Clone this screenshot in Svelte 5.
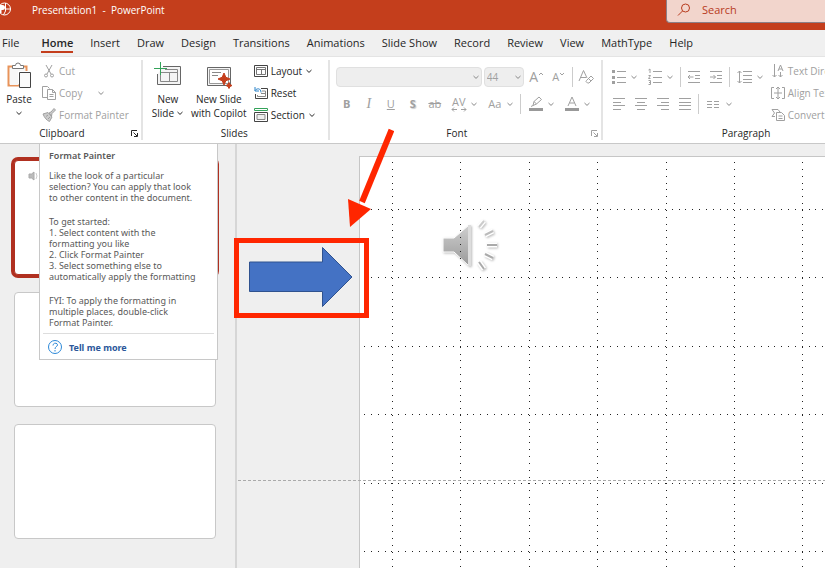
<script>
    const tabs = ['File', 'Home', 'Insert', 'Draw', 'Design', 'Transitions', 'Animations', 'Slide Show', 'Record', 'Review', 'View', 'MathType', 'Help'];
    let activeTab = $state('Home');

    const slides = [1, 2, 3];
    let currentSlide = $state(1);

    // Grid lines of the slide, counted from its top left corner
    const cell = 68.4;
    const gridX = Array.from({ length: 24 }, (_, i) => 32.5 + i * cell);
    const gridY = Array.from({ length: 16 }, (_, i) => 52.5 + i * cell);
</script>

{#snippet chevron()}
    <svg class="chevron" viewBox="0 0 8 8" width="8" height="8"><path d="M1.5 3l2.5 2.4L6.5 3" /></svg>
{/snippet}

{#snippet launcher()}
    <svg viewBox="0 0 9 9" width="9" height="9"><path d="M1.5 7V1.5H7M3.5 3.5L7 7M7.5 4v3.5H4" /></svg>
{/snippet}

<div class="app">
    <header class="titlebar">
        <svg class="logo" viewBox="0 0 12 18" width="12" height="18">
            <circle cx="4.5" cy="9" r="6" />
            <path d="M5.5 3v6h5M5.5 9v2l-2 4" />
            <path class="solid" d="M0 5h2.500a2.500 2.500 0 0 1 0 5H1.500v3H0z" />
        </svg>
        <span class="title">Presentation1&nbsp; -&nbsp; PowerPoint</span>
        <label class="search">
            <svg viewBox="0 0 14 14" width="14" height="14"><circle cx="8.5" cy="5" r="4" /><path d="M5.5 8L1 12.5" /></svg>
            <input type="text" placeholder="Search" aria-label="Search" />
        </label>
    </header>

    <nav class="tabs">
        {#each tabs as tab}
            <button class:active={tab === activeTab} onclick={() => (activeTab = tab)}>{tab}</button>
        {/each}
    </nav>

    <div class="ribbon">
        <section class="group clipboard">
            <div class="body">
                <button class="big">
                    <svg viewBox="0 0 26 28" width="26" height="28">
                        <path d="M7 4.500H2.500v19H13M18 4.500h2.500V9" stroke="#e8935a" stroke-width="2" />
                        <path d="M4 6h15v3h-7v14H4z" fill="#f7f7f7" stroke="none" />
                        <path d="M6.500 6.500v-3h3a2.500 2.500 0 0 1 5 0h3v3z" fill="#fff" stroke="#777" />
                        <path d="M13.500 10.500h11v15h-11z" fill="#fafafa" stroke="#444" />
                    </svg>
                    <span>Paste</span>
                    {@render chevron()}
                </button>
                <div class="stack dim">
                    <button class="small">
                        <svg viewBox="0 0 14 14" width="14" height="14"><path d="M4 1l5 9M10 1L5 10" /><circle cx="4" cy="11.500" r="1.500" /><circle cx="10" cy="11.500" r="1.500" /></svg>
                        Cut
                    </button>
                    <button class="small">
                        <svg viewBox="0 0 14 14" width="14" height="14"><path d="M5 11.500H.5v-11h5l2 2M5.500 3.500h5l3 3v7h-8zM10.500 3.500v3h3M7.500 8.500h4M7.500 10.500h4" /></svg>
                        Copy
                        <span class="spaced">{@render chevron()}</span>
                    </button>
                    <button class="small">
                        <svg viewBox="0 0 14 14" width="14" height="14"><path d="M7 5l2 -1 3-3.500 1.500 1.500L10 5.500 9.500 8z" fill="#ccc" /><path d="M1 6l5-1.500L10 9l-2.500 4.500C5 12.500 2.500 10 1 6zM4 8.500l2-1.500M6 11l2-2" fill="#ccc" /></svg>
                        Format Painter
                    </button>
                </div>
            </div>
            <footer><span>Clipboard</span><button class="launch" aria-label="Clipboard options">{@render launcher()}</button></footer>
        </section>

        <section class="group slides">
            <div class="body">
                <button class="big">
                    <svg viewBox="0 0 28 28" width="28" height="28">
                        <path d="M9 4.500h17.500v18h-23V12" fill="#f4f4f4" stroke="#666" />
                        <path d="M11 7.500h12.500v12h-17V12M7 10.500h16M15.500 10.500v9" stroke="#888" />
                        <path d="M6.500 0v13M0 6.500h13" stroke="#34a35a" />
                    </svg>
                    <span>New</span>
                    <span class="inline">Slide {@render chevron()}</span>
                </button>
                <button class="big">
                    <svg viewBox="0 0 28 28" width="28" height="28">
                        <path d="M2.500 5.500h23v18h-23z" fill="#f4f4f4" stroke="#666" />
                        <path d="M4.500 7.500h19v14h-19z" fill="#fff" stroke="#999" />
                        <path d="M7 10.500h9M7 13.500h6" stroke="#888" />
                        <path d="M19 11l1.800 4.200L25 17l-4.200 1.800L19 23l-1.800-4.200L13 17l4.200-1.800z" fill="#c43e1c" stroke="#c43e1c" />
                        <path d="M24 20.500l1 2 2 1-2 1-1 2-1-2-2-1 2-1z" fill="#c43e1c" stroke="#c43e1c" />
                    </svg>
                    <span>New Slide</span>
                    <span>with Copilot</span>
                </button>
                <div class="stack">
                    <button class="small">
                        <svg viewBox="0 0 14 14" width="14" height="14"><path d="M.5 1.500h13v11H.5z" stroke="#444" /><path d="M2.500 3.500h9v7h-9zM2.500 5.500h9M7.500 5.500v5" stroke="#777" /></svg>
                        Layout {@render chevron()}
                    </button>
                    <button class="small">
                        <svg viewBox="0 0 14 14" width="14" height="14"><path d="M7 2.500h6.500v10H1.500V8" stroke="#444" /><path d="M8 5h3.500v5.500H3.500V9M7 7.500h4" stroke="#888" /><path d="M1 1v4h4M1 4.500C3 2 7 2 7 6.500" stroke="#2b83c9" /></svg>
                        Reset
                    </button>
                    <button class="small">
                        <svg viewBox="0 0 14 14" width="14" height="14"><path d="M.5 .5h13v2H.5z" stroke="#34a35a" /><path d="M.5 4.500h13v9H.5z" stroke="#444" /><path d="M3 6.500h8v5H3z" stroke="#888" fill="#eee" /></svg>
                        Section {@render chevron()}
                    </button>
                </div>
            </div>
            <footer><span>Slides</span></footer>
        </section>

        <section class="group font">
            <div class="body rows dim">
                <div class="row">
                    <span class="picker family"><select aria-label="Font"><option></option></select>{@render chevron()}</span>
                    <span class="picker size"><select aria-label="Font size"><option>44</option></select>{@render chevron()}</span>
                    <button class="tool letter" aria-label="Increase font size">A<svg viewBox="0 0 6 12" width="6" height="12"><path d="M1 4l2-2 2 2" /></svg></button>
                    <button class="tool" aria-label="Decrease font size">A<svg viewBox="0 0 6 12" width="6" height="12"><path d="M1 2l2 2 2-2" /></svg></button>
                    <i class="divider"></i>
                    <button class="tool" aria-label="Clear formatting">
                        <svg viewBox="0 0 16 16" width="16" height="16"><path d="M1 12L5.500 1.500 9 9M3 8.500h5M8.500 11.500L13 7l2.500 2.500-4.500 4.500H9.500l-1.500-1.500zM10.500 9.500L13 12" /></svg>
                    </button>
                </div>
                <div class="row">
                    <button class="tool"><b>B</b></button>
                    <button class="tool"><em>I</em></button>
                    <button class="tool"><u>U</u></button>
                    <button class="tool shadow"><b>S</b></button>
                    <button class="tool"><s>ab</s></button>
                    <button class="drop" aria-label="Character spacing">
                        <span class="glyph spacing">AV<svg viewBox="0 0 16 5" width="16" height="5"><path d="M3 .5L1 2.500l2 2M1 2.500h5M13 .5l2 2-2 2M15 2.500h-5" /></svg></span>
                        {@render chevron()}
                    </button>
                    <button class="drop"><span class="glyph">Aa</span>{@render chevron()}</button>
                    <i class="divider"></i>
                    <button class="drop" aria-label="Highlight colour">
                        <svg class="glyph" viewBox="0 0 18 18" width="18" height="18"><path d="M6 10.500l1-4L12 2l2.500 2.500-5 4.500zM4 11.500l2-1M7 6.500l2.500 2.500" /><path d="M2 13h14v3H2z" fill="#999" stroke="none" /></svg>
                        {@render chevron()}
                    </button>
                    <button class="drop" aria-label="Font colour">
                        <svg class="glyph" viewBox="0 0 18 18" width="18" height="18"><path d="M5 11l4-9 4 9M6.500 8h5" /><path d="M2 13h14v3H2z" fill="#999" stroke="none" /></svg>
                        {@render chevron()}
                    </button>
                </div>
            </div>
            <footer><span>Font</span><button class="launch dim" aria-label="Font options">{@render launcher()}</button></footer>
        </section>

        <section class="group paragraph">
            <div class="body dim">
                <div class="rows">
                    <div class="row">
                        <button class="drop" aria-label="Bullets">
                            <svg class="glyph" viewBox="0 0 18 18" width="18" height="18"><path d="M7 3.500h9M7 9.500h9M7 14.500h9" /><path d="M2 2h3v3H2zM2 8h3v3H2zM2 13h3v3H2z" fill="#a0a0a0" stroke="none" /></svg>
                            {@render chevron()}
                        </button>
                        <button class="drop" aria-label="Numbering">
                            <svg class="glyph" viewBox="0 0 18 18" width="18" height="18"><path d="M7 3.500h9M7 9.500h9M7 14.500h9M2.500 2L4 1v4M2.500 7.500h2L2.500 10.500h2M2.500 12.500h2v4h-2M3 14.500h1.500" /></svg>
                            {@render chevron()}
                        </button>
                        <i class="divider"></i>
                        <button class="tool" aria-label="Decrease indent">
                            <svg viewBox="0 0 14 14" width="14" height="14"><path d="M1 1.500h12M8 5.500h5M8 8.500h5M1 12.500h12M6.500 7H1M3 5L1 7l2 2" /></svg>
                        </button>
                        <button class="tool" aria-label="Increase indent">
                            <svg viewBox="0 0 14 14" width="14" height="14"><path d="M1 1.500h12M8 5.500h5M8 8.500h5M1 12.500h12M1 7h5.500M4.500 5l2 2-2 2" /></svg>
                        </button>
                        <i class="divider"></i>
                        <button class="drop" aria-label="Line spacing">
                            <svg class="glyph" viewBox="0 0 18 18" width="18" height="18"><path d="M7 3.500h9M7 7.500h9M7 11.500h9M7 14.500h9M3.500 3v12M1.500 5l2-2 2 2M1.500 13l2 2 2-2" /></svg>
                            {@render chevron()}
                        </button>
                    </div>
                    <div class="row aligns">
                        <button class="tool" aria-label="Align left">
                            <svg viewBox="0 0 14 14" width="14" height="14"><path d="M1 1.500h12M1 5.500h8M1 8.500h12M1 12.500h8" /></svg>
                        </button>
                        <button class="tool" aria-label="Centre">
                            <svg viewBox="0 0 14 14" width="14" height="14"><path d="M1 1.500h12M3 5.500h8M1 8.500h12M3 12.500h8" /></svg>
                        </button>
                        <button class="tool" aria-label="Align right">
                            <svg viewBox="0 0 14 14" width="14" height="14"><path d="M1 1.500h12M5 5.500h8M1 8.500h12M5 12.500h8" /></svg>
                        </button>
                        <button class="tool" aria-label="Justify">
                            <svg viewBox="0 0 14 14" width="14" height="14"><path d="M1 1.500h12M1 5.500h12M1 8.500h12M1 12.500h12" /></svg>
                        </button>
                        <i class="divider"></i>
                        <button class="drop" aria-label="Columns">
                            <svg class="glyph" viewBox="0 0 18 18" width="18" height="18"><path d="M2 6.500h5M9 6.500h5M2 9.500h5M9 9.500h5M2 12.500h5M9 12.500h5" /></svg>
                            {@render chevron()}
                        </button>
                    </div>
                </div>
                <div class="stack">
                    <button class="small">
                        <svg viewBox="0 0 14 14" width="14" height="14"><path d="M3.500 0v13M1.500 11l2 2 2-2M7 7l2.500-6L12 7M8 5h3M9.500 8v5M7.500 11l2 2 2-2" /></svg>
                        Text Direction
                    </button>
                    <button class="small">
                        <svg viewBox="0 0 14 14" width="14" height="14"><path d="M3 1.500H.5v11H3M11 1.500h2.500v11H11M3 7h8M7 1v12M5 3l2-2 2 2M5 11l2 2 2-2" /></svg>
                        Align Text
                    </button>
                    <button class="small">
                        <svg viewBox="0 0 14 14" width="14" height="14"><path d="M1 1.500h6l2 2.500M1 1.500L3.500 5 1 8.500h3M5.500 4.500h5l3 3v5h-8zM7.500 8h4M7.500 10.500h4" /></svg>
                        Convert to SmartArt
                    </button>
                </div>
            </div>
            <footer><span>Paragraph</span></footer>
        </section>
    </div>

    <main class="workspace">
        <aside class="thumbs">
            {#each slides as slide}
                <button class="thumb" class:current={slide === currentSlide} aria-label="Slide {slide}" onclick={() => (currentSlide = slide)}>
                    {#if slide === 1}
                        <svg viewBox="0 0 12 12" width="12" height="12"><path d="M1 4h2.500L6 2v8L3.500 8H1z" fill="#bbb" stroke="#aaa" /><path d="M8 3q2 3 0 6" stroke="#ccc" /></svg>
                    {/if}
                </button>
            {/each}
        </aside>

        <div class="stage">
            <div class="slide">
                <svg class="speaker" viewBox="0 0 60 58" width="60" height="58">
                    <defs>
                        <linearGradient id="cone" x1="0" y1="0" x2="0" y2="1">
                            <stop offset="0" stop-color="#cfcfcf" />
                            <stop offset="1" stop-color="#999" />
                        </linearGradient>
                    </defs>
                    <path d="M3 20h11L29 7v41L14 34H3z" fill="url(#cone)" stroke="#fff" />
                    <path d="M28 7h3v41h-3z" fill="#ddd" stroke="none" />
                    <g stroke="#fff" stroke-width="5"><path d="M39 9l5-6M45 17l8-4M47 27h10M45 36l8 4M39 44l5 7" /></g>
                    <g stroke="#aaa" stroke-width="2"><path d="M39 9l5-6" stroke="#ccc" /><path d="M45 17l8-4" stroke="#bbb" /><path d="M47 27h10M45 36l8 4M39 44l5 7" /></g>
                </svg>
                <svg class="grid" width="100%" height="100%">
                    {#each gridX as x}
                        <line x1={x} y1="5" x2={x} y2="100%" />
                    {/each}
                    {#each gridY as y}
                        <line x1="4" y1={y} x2="100%" y2={y} />
                    {/each}
                </svg>
            </div>
            <div class="guide"></div>
            <svg class="shape" viewBox="0 0 106 62" width="106" height="62">
                <path d="M1.500 16h73V1.500L104 31 74.500 60.500V45.500h-73z" />
            </svg>
        </div>

        <div class="tooltip" role="tooltip">
            <h2>Format Painter</h2>
            <p>Like the look of a particular<br />selection? You can apply that look<br />to other content in the document.</p>
            <p>To get started:<br />1. Select content with the<br />formatting you like<br />2. Click Format Painter<br />3. Select something else to<br />automatically apply the formatting</p>
            <p>FYI: To apply the formatting in<br />multiple places, double-click<br />Format Painter.</p>
            <a href="#help">
                <svg viewBox="0 0 16 16" width="16" height="16"><circle cx="8" cy="8" r="6.500" /><path d="M6 6.500c0-3 4.500-3 4.500-.5C10.500 7.500 8 7.500 8 10M8 11v1.500" /></svg>
                Tell me more
            </a>
        </div>
    </main>

    <!-- Red callout drawn over the window -->
    <div class="callout"></div>
    <svg class="pointer" viewBox="0 0 46 100" width="46" height="100">
        <path d="M43.500 2L14 74" stroke="#ff2600" stroke-width="6" />
        <path d="M0 71l23 10L2 99z" fill="#ff2600" />
    </svg>
</div>

<style>
:global(body) {
    margin: 0;
    background: #efefef;
}

.app {
    position: relative;
    display: flex;
    flex-direction: column;
    height: 100vh;
    overflow: hidden;
    font-family: "Open Sans", "Noto Sans", sans-serif;
    font-size: 10px;
    line-height: 14px;
    color: #262626;
}

button, select, input {
    font: inherit;
    color: inherit;
    background: none;
    border: 0;
    padding: 0;
    margin: 0;
}

svg {
    flex: none;
    fill: none;
    stroke: currentColor;
}

/* Title bar */
.titlebar {
    display: flex;
    flex: none;
    align-items: flex-start;
    height: 30px;
    background: #c43e1c;
    color: #fff;
}

.logo .solid {
    fill: #fff;
    stroke: none;
}

.title {
    flex: 1;
    padding: 3px 0 0 20px;
}

.search {
    display: flex;
    flex: 0 0 159px;
    align-items: center;
    gap: 11px;
    height: 23px;
    padding: 0 0 3px 10px;
    overflow: hidden;
    box-sizing: border-box;
    background: #f2d5cc;
    border: solid #8c7f86;
    border-width: 0 0 1px 1px;
    border-radius: 0 0 0 4px;
    color: #b83b1d;
}

.search input {
    width: 100%;
    font-size: 11px;
}

.search input::placeholder {
    color: #b83b1d;
    opacity: 1;
}

/* Tabs */
.tabs {
    display: flex;
    flex: none;
    gap: 17px;
    height: 26px;
    padding-left: 2px;
    background: #f0f0f0;
    border-bottom: 1px solid #e4e4e4;
    font-size: 11px;
    white-space: nowrap;
}

.tabs button {
    align-self: center;
    border: solid transparent;
    border-width: 2px 0;
    line-height: 16px;
}

.tabs button:first-child {
    margin-right: 5px;
}

.tabs .active {
    font-weight: 600;
    border-bottom-color: #c43e1c;
}

/* Ribbon */
.ribbon {
    display: flex;
    flex: none;
    height: 86px;
    background: #fff;
    border-bottom: 1px solid #c8c8c8;
    white-space: nowrap;
}

.group {
    display: flex;
    flex: none;
    flex-direction: column;
    margin: 3px 0;
    border-right: 2px solid #e4e4e4;
}

.body {
    display: flex;
    flex: 1;
}

footer {
    display: flex;
    align-items: center;
    padding-right: 2px;
}

footer span {
    flex: 1;
    text-align: center;
}

.launch {
    display: flex;
    padding-left: 6px;
}

.dim {
    color: #a0a0a0;
}

.dim .chevron {
    color: #888;
}

.big {
    display: flex;
    flex-direction: column;
    align-items: center;
    padding-top: 2px;
}

.big > svg:first-child {
    margin-bottom: 2px;
}

.big > .chevron {
    margin-top: 3px;
}

.inline {
    display: flex;
    align-items: center;
    gap: 2px;
}

.stack {
    display: flex;
    flex-direction: column;
    align-items: flex-start;
}

.small {
    display: flex;
    align-items: center;
    gap: 3px;
    height: 22px;
}

.spaced {
    display: flex;
    padding-left: 12px;
}

.clipboard .body {
    gap: 10px;
    padding: 0 12px 0 6px;
}

.slides .body {
    gap: 7px;
    padding: 0 12px 0 9px;
}

.rows {
    display: flex;
    flex-direction: column;
    gap: 5px;
    padding-top: 6px;
}

.font .body {
    padding: 6px 4px 0 6px;
}

.row {
    display: flex;
    align-items: center;
    height: 22px;
}

.tool {
    display: flex;
    align-items: center;
    justify-content: center;
    width: 22px;
    height: 22px;
    font-size: 11px;
}

.letter {
    font-size: 14px;
}

.tool em {
    font-family: "Liberation Serif", serif;
    font-size: 14px;
}

.shadow {
    text-shadow: 1px 1px 1px #ccc;
}

.drop {
    display: flex;
    align-items: center;
    justify-content: center;
    gap: 2px;
    width: 36px;
    height: 22px;
}

.glyph {
    width: 18px;
    font-size: 11px;
    text-align: center;
}

.spacing {
    display: flex;
    flex-direction: column;
    align-items: center;
    line-height: 10px;
}

.divider {
    width: 1px;
    height: 20px;
    margin: 0 2px;
    background: #ccc;
}

.picker {
    display: flex;
    align-items: center;
    height: 20px;
    margin-right: 2px;
    padding: 0 1px 0 2px;
    box-sizing: border-box;
    background: #eee;
    border: 1px solid #e0e0e0;
    border-radius: 4px;
}

.picker select {
    appearance: none;
    flex: 1;
    min-width: 0;
}

.family {
    width: 146px;
}

.size {
    width: 40px;
}

.paragraph .body {
    gap: 3px;
    padding: 0 10px 0 3px;
}

.aligns {
    padding-left: 2px;
}

/* Workspace */
.workspace {
    position: relative;
    display: flex;
    flex: 1;
    min-height: 0;
}

.thumbs {
    display: flex;
    flex: 0 0 237px;
    flex-direction: column;
    gap: 17px;
    padding: 16px 19px 0 14px;
    box-sizing: border-box;
    border-right: 2px solid #d6d6d6;
}

.thumb {
    display: flex;
    flex: none;
    align-items: flex-start;
    aspect-ratio: 202 / 115;
    padding: 9px 13px;
    box-sizing: border-box;
    background: #fff;
    border: 1px solid #c8c8c8;
    border-radius: 4px;
}

.thumb.current {
    border-color: #b03020;
    box-shadow: 0 0 0 3px #b03020;
}

.stage {
    position: relative;
    display: flex;
    flex: 1;
    padding: 12px 0 0 122px;
    overflow: hidden;
}

.slide {
    position: relative;
    flex: 1;
    background: #fff;
    border: solid #c6c6c6;
    border-width: 1px 0 0 1px;
}

.grid {
    position: absolute;
    inset: 0;
    color: #222;
    stroke-dasharray: 1 5.84;
    shape-rendering: crispEdges;
}

.speaker {
    position: absolute;
    left: 80px;
    top: 61px;
    filter: drop-shadow(1px 1px 1px #bbb);
}

.guide {
    position: absolute;
    left: 1px;
    right: 0;
    top: 336px;
    height: 1px;
    background: repeating-linear-gradient(90deg, #aaa 0 3px, transparent 3px 5px);
}

.shape {
    position: absolute;
    left: 11px;
    top: 102px;
    fill: #4472c4;
    stroke: #2f528f;
}

/* Screen tip */
.tooltip {
    position: absolute;
    left: 39px;
    top: -1px;
    padding: 6px 3px 4px;
    background: #fff;
    border: 1px solid #c8c8c8;
    font-family: "Noto Sans", "Open Sans", sans-serif;
    font-size: 9px;
    line-height: 11px;
    color: #595959;
    white-space: nowrap;
}

.tooltip h2 {
    margin: 0 6px 9px;
    font-size: 9px;
    font-weight: 600;
}

.tooltip p {
    margin: 0 18px 13px 6px;
}

.tooltip a {
    display: flex;
    align-items: center;
    gap: 6px;
    margin-top: -8px;
    padding: 5px 4px 0;
    border-top: 1px solid #ddd;
    color: #2b579a;
    font-weight: 700;
    text-decoration: none;
}

.tooltip a svg {
    color: #2b88d8;
}

/* Callout */
.callout {
    position: absolute;
    left: 234px;
    top: 238px;
    width: 125px;
    height: 70px;
    border: 5px solid #ff2600;
}

.pointer {
    position: absolute;
    left: 348px;
    top: 128px;
    stroke: none;
}
</style>
